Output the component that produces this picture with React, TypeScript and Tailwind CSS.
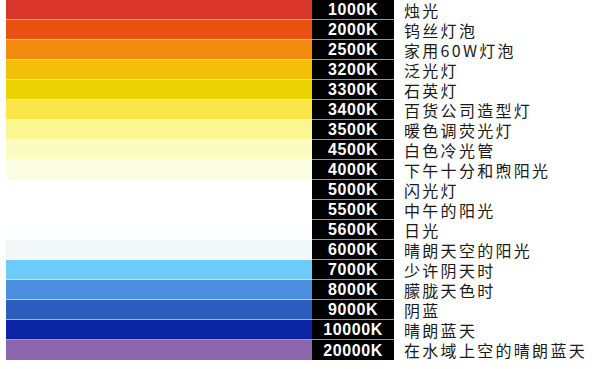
import React from "react";

const rows: { k: string; label: string; bg: string }[] = [
  { k: "1000K", label: "烛光", bg: "bg-[#da352b]" },
  { k: "2000K", label: "钨丝灯泡", bg: "bg-[#e9520e]" },
  { k: "2500K", label: "家用60W灯泡", bg: "bg-[#f28b0e]" },
  { k: "3200K", label: "泛光灯", bg: "bg-[#f6bf07]" },
  { k: "3300K", label: "石英灯", bg: "bg-[#ebd203]" },
  { k: "3400K", label: "百货公司造型灯", bg: "bg-[#fbe64a]" },
  { k: "3500K", label: "暖色调荧光灯", bg: "bg-[#fcf690]" },
  { k: "4500K", label: "白色冷光管", bg: "bg-[#fdfcc0]" },
  { k: "4000K", label: "下午十分和煦阳光", bg: "bg-[#fbfde2]" },
  { k: "5000K", label: "闪光灯", bg: "bg-[#ffffff]" },
  { k: "5500K", label: "中午的阳光", bg: "bg-[#ffffff]" },
  { k: "5600K", label: "日光", bg: "bg-[#fdfeff]" },
  { k: "6000K", label: "晴朗天空的阳光", bg: "bg-[#f2f7fa]" },
  { k: "7000K", label: "少许阴天时", bg: "bg-[#6ccbf9]" },
  { k: "8000K", label: "朦胧天色时", bg: "bg-[#4b8ddf]" },
  { k: "9000K", label: "阴蓝", bg: "bg-[#2c5cbd]" },
  { k: "10000K", label: "晴朗蓝天", bg: "bg-[#0b24a6]" },
  { k: "20000K", label: "在水域上空的晴朗蓝天", bg: "bg-[#8e66ad]" },
];

export default function App() {
  return (
    <div className="w-[600px] h-[369px] bg-white overflow-hidden">
      <div className="flex flex-col">
        {rows.map((r, i) => (
          <div key={r.k} className="flex h-[20px] items-stretch">
            <div className="w-[6px] bg-white" />
            <div
              className={`w-[306px] ${r.bg} ${
                i < rows.length - 1 ? "border-b border-[rgba(255,255,255,0.55)]" : ""
              }`}
            />
            <div
              className={`w-[82px] bg-black flex items-center justify-center ${
                i < rows.length - 1 ? "border-b border-[#9a9a9a]" : ""
              }`}
            >
              <span
                className="text-white font-bold text-[16px] leading-[19px] tracking-[0.6px]"
                style={{ fontFamily: '"Liberation Sans", Arial, sans-serif' }}
              >
                {r.k}
              </span>
            </div>
            <div className="flex items-center pl-[10px] h-[20px]">
              <span
                className="text-[#1a1a1a] text-[16px] leading-[19px] tracking-[2.3px]"
                style={{ fontFamily: '"Noto Sans CJK SC", "Noto Sans", sans-serif' }}
              >
                {r.label}
              </span>
            </div>
          </div>
        ))}
      </div>
    </div>
  );
}
